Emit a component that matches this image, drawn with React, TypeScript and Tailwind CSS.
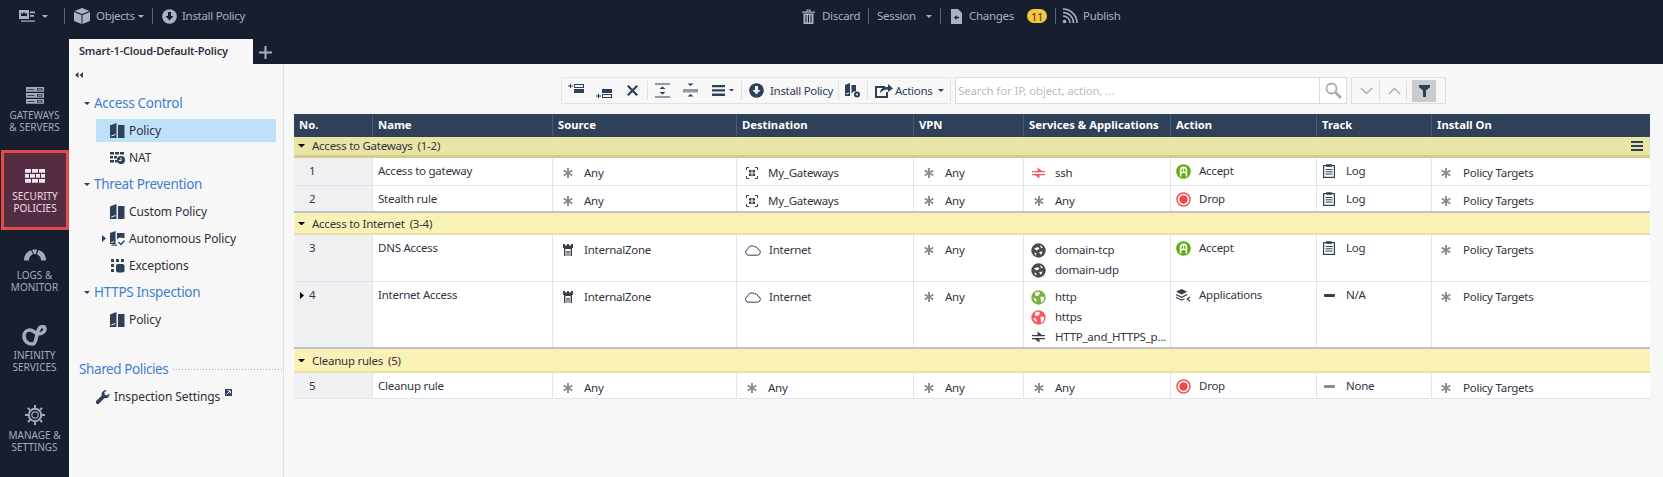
import React from "react";

const NAVY = "#2e3f58";

function Ast({ c = "#8c8c8c" }: { c?: string }) {
  return (
    <svg width="12" height="12" viewBox="0 0 12 12" stroke={c} strokeWidth="1.900">
      <path d="M6 1v10M1.700 3.500l8.600 5M10.300 3.500l-8.600 5" />
    </svg>
  );
}
function Gw() {
  return (
    <svg width="12" height="12" viewBox="0 0 12 12" fill="none" stroke="#3a3f4a" strokeWidth="1">
      <path d="M.5 3V.5H3M9 .5h2.500V3M11.500 9v2.500H9M3 11.500H.5V9" />
      <rect x="3" y="3" width="2.500" height="2.500" fill="#3a3f4a" stroke="none" />
      <rect x="6.500" y="3" width="2.500" height="2.500" fill="#3a3f4a" stroke="none" />
      <rect x="3" y="6.500" width="2.500" height="2.500" fill="#3a3f4a" stroke="none" />
      <rect x="6.500" y="6.500" width="2.500" height="2.500" fill="#3a3f4a" stroke="none" />
    </svg>
  );
}
function Cloud() {
  return (
    <svg width="17" height="12" viewBox="0 0 17 12" fill="none" stroke={NAVY} strokeWidth="1">
      <path d="M4 11.200h9.500a3 3 0 0 0 .6-5.900A3.800 3.800 0 0 0 10.300 2.600 4.300 4.300 0 0 0 3.600 5.400 3 3 0 0 0 4 11.200z" />
    </svg>
  );
}
function Tower() {
  return (
    <svg width="10" height="12" viewBox="0 0 10 12" fill="#3a3f4a">
      <path d="M0 0h2v1.500h2V0h2v1.500h2V0h2v4H0zM1 4h8v1H1zM1 5h1.400v7H1zM7.600 5H9v7H7.600zM3.500 7h3v1h-3zM3.500 8h1v4h-1zM5.500 8h1v4h-1z" />
    </svg>
  );
}
function Swap({ c }: { c: string }) {
  return (
    <svg width="13" height="12" viewBox="0 0 13 12" fill={c}>
      <path d="M0 4h5.500V.5L10 4h3v1.200H0zM0 7h13v1.200H7.500V11.500L3 8.200H0z" />
    </svg>
  );
}
function Domain() {
  return (
    <svg width="15" height="15" viewBox="0 0 15 15">
      <circle cx="7.500" cy="7.500" r="7.200" fill="#4a4a4f" />
      <path d="M3 5.500l4-1.500 1.500 2-3 1.500zM9 2l3 2.500-2 .8zM8 9l3.500-.5L10 12zM3 9.500l2.500 1L5 13z" fill="#fff" />
    </svg>
  );
}
function Globe({ c }: { c: string }) {
  return (
    <svg width="15" height="15" viewBox="0 0 15 15">
      <circle cx="7.500" cy="7.500" r="7.200" fill={c} />
      <path d="M4 2.500l4-1 1 2-2 2.500-3-.5zM9.500 6.500l4 .5-1 4-2.500 2zM2 8l3 .5 1 3.500-2-1z" fill="#fff" opacity="0.950" />
    </svg>
  );
}
function Accept() {
  return (
    <svg width="15" height="15" viewBox="0 0 15 15">
      <circle cx="7.500" cy="7.500" r="7.300" fill="#5cae0f" />
      <path d="M3.800 12.500V6.200a3.700 3.700 0 0 1 7.400 0v6.300h-1.600V9.300h-4.200v3.200zM5.400 7.800h1.500V4.300A2 2 0 0 0 5.400 6.200zM8.100 7.800h1.500V6.200a2 2 0 0 0-1.500-1.900z" fill="#fff" fillRule="evenodd" />
    </svg>
  );
}
function Drop() {
  return (
    <svg width="15" height="15" viewBox="0 0 15 15">
      <circle cx="7.500" cy="7.500" r="6.500" fill="#fff" stroke="#f0555a" strokeWidth="1.500" />
      <circle cx="7.500" cy="7.500" r="4.200" fill="#f0474c" />
    </svg>
  );
}
function Log() {
  return (
    <svg width="12" height="14" viewBox="0 0 12 14" fill="none" stroke={NAVY}>
      <rect x=".6" y="1.600" width="10.800" height="11.800" strokeWidth="1.200" />
      <path d="M3.500 .5h5v2h-5z" fill={NAVY} strokeWidth="0.600" />
      <path d="M2.500 5.500h7M2.500 7.800h7M2.500 10.100h7" strokeWidth="1" />
    </svg>
  );
}
function Apps() {
  return (
    <svg width="16" height="15" viewBox="0 0 16 15" fill="none">
      <path d="M0 3.500L6 .5l6 3-6 3z" fill="#3a3f4a" />
      <path d="M0 6.500l6 3 6-3M0 9.500l6 3 3-1.500" stroke="#3a3f4a" strokeWidth="1.200" />
      <path d="M15 9l-3 2.300 3 2.300" stroke="#3a3f4a" strokeWidth="1.300" />
    </svg>
  );
}
function Dash({ c }: { c: string }) {
  return <span className="block w-[11px] h-[3px] rounded-[1px]" style={{ background: c }} />;
}
function CaretDown({ c = "#000", w = 8 }: { c?: string; w?: number }) {
  return (
    <svg width={w} height={w / 2} viewBox="0 0 8 4" fill={c}>
      <path d="M0 0h8L4 4z" />
    </svg>
  );
}
function Book() {
  return (
    <svg width="15" height="15" viewBox="0 0 15 15" fill={NAVY}>
      <path d="M0 2.500L6.500 0v15H0z" />
      <path d="M1.300 13.500L5.500 12V11L1.300 12.500z" fill="#f7f7f7" />
      <path d="M8 2h6.500v13H8z" />
    </svg>
  );
}

function Sep() {
  return <span className="block w-px h-[16px] bg-[#5a6472]" />;
}

function TopBar() {
  return (
    <div className="h-[39px] pb-[7px] flex items-center text-[11.500px] tracking-[-0.3px] text-[#a8b2bf] shrink-0 whitespace-nowrap">
      <svg className="ml-[19px]" width="16" height="14" viewBox="0 0 16 14" fill="#aab3bd">
        <path d="M0 1h10v9H0zM2 3.500L3.500 5 5 3l1.500 2L8 3.500V7H2z" fillRule="evenodd" />
        <path d="M11 2.500h5v1.800h-5zM11 6h4v1.800h-4zM2 11.500h14v1.200H2z" />
      </svg>
      <span className="ml-[7px]"><CaretDown c="#aab3bd" w={6} /></span>
      <span className="ml-[16px]"><Sep /></span>
      <svg className="ml-[9px]" width="16" height="16" viewBox="0 0 16 16" fill="#aab3bd">
        <path d="M8 0l7.500 3L8 6 .5 3zM0 4l7.500 3v9L0 13zM16 4L8.500 7v9l7.500-3z" />
      </svg>
      <span className="ml-[6px] w-[41px]">Objects</span>
      <span className="ml-[1px]"><CaretDown c="#aab3bd" w={6} /></span>
      <span className="ml-[8px]"><Sep /></span>
      <svg className="ml-[9px]" width="15" height="15" viewBox="0 0 15 15">
        <circle cx="7.500" cy="7.500" r="7.300" fill="#aab3bd" />
        <path d="M6 3h3v4h2.500l-4 4.500-4-4.500H6z" fill="#171f2e" />
      </svg>
      <span className="ml-[5px] w-[66px]">Install Policy</span>

      <svg className="ml-[554px]" width="13" height="15" viewBox="0 0 13 15" fill="#aab3bd">
        <path d="M0 2.500h13v1.200H0zM4.500 2.500V.5h4v2h-1V1.500h-2v1zM1.500 4.500h10V15h-10zM3.500 6v7.500h1V6zM6 6v7.500h1V6zM8.500 6v7.500h1V6z" fillRule="evenodd" />
      </svg>
      <span className="ml-[7px] w-[40px]">Discard</span>
      <span className="ml-[6px]"><Sep /></span>
      <span className="ml-[8px] w-[42px]">Session</span>
      <span className="ml-[7px]"><CaretDown c="#aab3bd" w={6} /></span>
      <span className="ml-[8px]"><Sep /></span>
      <svg className="ml-[10px]" width="11" height="15" viewBox="0 0 11 15" fill="#aab3bd">
        <path d="M0 0h7l4 4v11H0zM3 8.500L5.500 6v1.800H8v1.400H5.500V11zM8 10.500z" fillRule="evenodd" />
      </svg>
      <span className="ml-[7px] w-[47px]">Changes</span>
      <span className="ml-[11px] w-[20px] h-[14px] rounded-full bg-[#f5c63c] text-[#3a3420] text-[11px] flex items-center justify-center leading-none">11</span>
      <span className="ml-[8px]"><Sep /></span>
      <svg className="ml-[6px]" width="16" height="16" viewBox="0 0 16 16" fill="none" stroke="#aab3bd" strokeWidth="1.500">
        <circle cx="2.500" cy="13.500" r="1.800" fill="#aab3bd" stroke="none" />
        <path d="M1 8a7 7 0 0 1 7 7M1 4.500A10.500 10.500 0 0 1 11.500 15M1 1a14 14 0 0 1 14 14" />
      </svg>
      <span className="ml-[5px]">Publish</span>
    </div>
  );
}

function NavItem({ icon, l1, l2, active }: { icon: React.ReactNode; l1: string; l2: string; active?: boolean }) {
  return (
    <div
      className={
        active
          ? "h-[80px] ml-[1px] w-[68px] flex flex-col items-center pt-[13px] bg-[#552d42] border-[3px] border-[#e34a4a] text-[#ecdfe6] text-[10px] leading-[12px]"
          : "h-[80px] w-[69px] flex flex-col items-center pt-[15px] text-[#a2acba] text-[10px] leading-[12px]"
      }
    >
      <div className="h-[20px] flex items-center justify-center">{icon}</div>
      <div className="mt-[4px] text-center whitespace-nowrap">{l1}</div>
      <div className="text-center whitespace-nowrap">{l2}</div>
    </div>
  );
}

function Sidebar() {
  return (
    <div className="w-[69px] pt-[31px] shrink-0">
      <NavItem
        l1="GATEWAYS"
        l2="& SERVERS"
        icon={
          <svg width="18" height="17" viewBox="0 0 18 17" fill="#a2acba">
            <path d="M0 0h18v4.800H0zM0 6h18v4.800H0zM0 12h18v4.800H0z" />
            <path d="M11 1.200h5.500v2.200H11zM11 7.200h5.500v2.200H11zM11 13.200h5.500v2.200H11z" fill="#171f2e" />
            <path d="M12 1.800h3.500v1H12zM12 7.800h3.500v1H12zM12 13.800h3.500v1H12z" fill="#a2acba" />
            <path d="M1.500 2h7v.8h-7zM1.500 8h7v.8h-7zM1.500 14h7v.8h-7z" fill="#171f2e" />
          </svg>
        }
      />
      <NavItem
        active
        l1="SECURITY"
        l2="POLICIES"
        icon={
          <svg width="20" height="14" viewBox="0 0 20 14" fill="#efe6ec">
            <path d="M0 0h6v3.800H0zM7 0h6v3.800H7zM14 0h6v3.800h-6zM0 5h4v3.800H0zM5 5h5v3.800H5zM11 5h4v3.800h-4zM16 5h4v3.800h-4zM0 10h6v3.800H0zM7 10h6v3.800H7zM14 10h6v3.800h-6z" />
          </svg>
        }
      />
      <NavItem
        l1="LOGS &"
        l2="MONITOR"
        icon={
          <svg width="22" height="12" viewBox="0 0 22 12" fill="#a2acba">
            <path d="M0 11.500A11 11 0 0 1 7 1.200l2 4A6.500 6.500 0 0 0 5 11.500z" />
            <path d="M8 .8a11 11 0 0 1 5 -.2l-1 4.500a6.500 6.500 0 0 0-2 .1z" />
            <path d="M14.500 1l-1.500 4.500A6.500 6.500 0 0 1 17 11.500h5A11 11 0 0 0 14.500 1z" />
          </svg>
        }
      />
      <NavItem
        l1="INFINITY"
        l2="SERVICES"
        icon={
          <svg width="25" height="21" viewBox="0 0 25 21" fill="none" stroke="#a2acba" strokeWidth="3.600">
            <path d="M11 19C6 19.500 2 16 2 11 2 7 5 5 8 5c4 0 5.500 4 8 4 3.500 0 7-2 7-5 0-1.800-1.200-2.500-2.500-2.500C16 1.500 15.500 8 14.500 12c-.8 3.500-1.500 6.800-3.500 7z" />
          </svg>
        }
      />
      <NavItem
        l1="MANAGE &"
        l2="SETTINGS"
        icon={
          <svg width="20" height="20" viewBox="0 0 20 20" fill="none" stroke="#a2acba">
            <circle cx="10" cy="10" r="6.200" strokeWidth="2" />
            <circle cx="10" cy="10" r="3.200" strokeWidth="1.200" />
            <path d="M10 0v3M10 17v3M0 10h3M17 10h3M2.900 2.900L5 5M15 15l2.100 2.100M17.100 2.900L15 5M5 15l-2.100 2.100" strokeWidth="2" />
          </svg>
        }
      />
    </div>
  );
}

function TreeHead({ t }: { t: string }) {
  return (
    <div className="h-[27px] flex items-center pl-[15px]">
      <CaretDown c={NAVY} w={6} />
      <span className="ml-[4px] text-[13.500px] tracking-[-0.3px] text-[#3f7fd0]">{t}</span>
    </div>
  );
}
function TreeItem({ icon, t, active, arrow }: { icon: React.ReactNode; t: string; active?: boolean; arrow?: boolean }) {
  return (
    <div className="h-[27px] flex items-center pl-[27px] pr-[7px]">
      <div className={active ? "w-full h-[23px] flex items-center bg-[#bde0fb] pl-[14px] relative" : "w-full h-[23px] flex items-center pl-[14px] relative"}>
        {arrow && (
          <svg className="absolute left-[6px] top-[8px]" width="4" height="7" viewBox="0 0 4 7" fill={NAVY}>
            <path d="M0 0l4 3.500L0 7z" />
          </svg>
        )}
        <span className="w-[15px] flex justify-center">{icon}</span>
        <span className="ml-[4px] text-[12px] tracking-[-0.1px] text-[#2f2f3d]">{t}</span>
      </div>
    </div>
  );
}

function Tree() {
  return (
    <div className="w-[215px] shrink-0 border-r border-[#dfe1e4]">
      <div className="h-[26px] pl-[6px] pt-[8px]">
        <svg width="8" height="6" viewBox="0 0 8 6" fill={NAVY}>
          <path d="M3.500 0v6L0 3zM8 0v6L4.500 3z" />
        </svg>
      </div>
      <TreeHead t="Access Control" />
      <TreeItem active t="Policy" icon={<Book />} />
      <TreeItem
        t="NAT"
        icon={
          <svg width="15" height="12" viewBox="0 0 15 12" fill={NAVY}>
            <path d="M0 0h4v2.500H0zM5 0h4v2.500H5zM10 0h4v2.500h-4zM0 4h3v2.500H0zM4 4h3v2.500H4zM0 8h4v2.500H0zM5 8h2v2.500H5z" />
            <circle cx="11" cy="8" r="4" />
            <path d="M10.500 5.500h1v3h-1zM9 8h2.500v1H9z" fill="#f7f7f7" />
          </svg>
        }
      />
      <TreeHead t="Threat Prevention" />
      <TreeItem t="Custom Policy" icon={<Book />} />
      <TreeItem
        arrow
        t="Autonomous Policy"
        icon={
          <svg width="15" height="15" viewBox="0 0 15 15" fill={NAVY}>
            <path d="M0 2L5.500 0v13H0z" />
            <path d="M1.200 12l3-1v-1l-3 1z" fill="#f7f7f7" />
            <path d="M7 2h7.500v5H12a3.500 3.500 0 0 0-5 2z" />
            <path d="M1.500 13.500h5.500v1.200H1.500z" />
            <path d="M8.500 11l2.500 2.500 3.500-4" fill="none" stroke={NAVY} strokeWidth="1.300" />
          </svg>
        }
      />
      <TreeItem
        t="Exceptions"
        icon={
          <svg width="14" height="14" viewBox="0 0 14 14" fill={NAVY}>
            <rect x="0" y="0" width="3" height="3" rx=".5" />
            <rect x="5" y="0" width="3" height="3" rx=".5" />
            <rect x="10" y="0" width="3" height="3" rx=".5" />
            <rect x="0" y="5" width="3" height="3" rx=".5" />
            <rect x="0" y="10" width="3" height="3" rx=".5" />
            <rect x="5" y="5" width="8.500" height="8.500" rx="2" />
          </svg>
        }
      />
      <TreeHead t="HTTPS Inspection" />
      <TreeItem t="Policy" icon={<Book />} />
      <div className="h-[23px]" />
      <div className="h-[27px] flex items-center pl-[10px]">
        <span className="text-[13.500px] tracking-[-0.4px] text-[#3f7fd0] whitespace-nowrap">Shared Policies</span>
        <span className="flex-1 ml-[5px] h-px bg-[repeating-linear-gradient(90deg,#a5abb3_0_1px,transparent_1px_3px)]" />
      </div>
      <div className="h-[27px] flex items-center pl-[27px]">
        <svg width="14" height="14" viewBox="0 0 14 14" fill={NAVY}>
          <path d="M13.500 3.500L11 5.500 8.800 4.800 8.300 2.500 10.800.4a4 4 0 0 0-5 5L.4 10.800a1.900 1.900 0 0 0 2.700 2.700l5.400-5.400a4 4 0 0 0 5-4.600z" />
        </svg>
        <span className="ml-[4px] text-[12px] tracking-[-0.1px] text-[#2f2f3d]">Inspection Settings</span>
        <svg className="ml-[5px] -mt-[9px]" width="7" height="7" viewBox="0 0 7 7">
          <rect width="7" height="7" fill={NAVY} />
          <path d="M1.500 5.500l3.500-3.500M2.500 1.700H5.300v2.800" stroke="#fff" strokeWidth="0.900" fill="none" />
        </svg>
      </div>
    </div>
  );
}

function TbSep() {
  return <span className="block w-px h-[19px] bg-[#dcdfe3]" />;
}

function RowAdd({ top }: { top?: boolean }) {
  const filledY = top ? 5 : 0;
  const hollowY = top ? 0 : 5;
  return (
    <svg width="16" height="9" viewBox="0 0 16 9" fill={NAVY}>
      <path d={`M0 ${hollowY + 2}h5M2.500 ${hollowY}v4`} stroke={NAVY} strokeWidth="1" fill="none" />
      <rect x="6.500" y={hollowY + 0.5} width="9" height="3" fill="none" stroke={NAVY} />
      <rect x="6" y={filledY} width="10" height="4" />
    </svg>
  );
}

function Toolbar() {
  return (
    <div className="flex items-start mt-[13px] h-[27px]">
      <div className="w-[390px] h-[27px] border border-[#e2e4e8] flex items-center text-[11.500px] tracking-[-0.3px] text-[#2f3e56] whitespace-nowrap">
        <span className="ml-[6px] -mt-[5px] leading-none"><RowAdd top /></span>
        <span className="ml-[12px] mt-[5px] leading-none"><RowAdd /></span>
        <svg className="ml-[15px]" width="11" height="11" viewBox="0 0 11 11" stroke={NAVY} strokeWidth="2.200">
          <path d="M.8.8l9.400 9.400M10.200.8L.8 10.200" />
        </svg>
        <span className="ml-[9px]"><TbSep /></span>
        <svg className="ml-[7px]" width="15" height="15" viewBox="0 0 15 15" fill={NAVY}>
          <path d="M0 .5h15v1H0zM0 13.500h15v1H0zM7.500 3.500l3 2.500h-6zM7.500 11.500l-3-2.500h6z" />
        </svg>
        <svg className="ml-[13px]" width="15" height="15" viewBox="0 0 15 15" fill={NAVY}>
          <path d="M0 6.500h15v1H0zM0 8.500h15v.8H0zM4.500 .5h6l-3 2.500zM7.500 11l3 2.500h-6z" />
        </svg>
        <svg className="ml-[14px]" width="13" height="11" viewBox="0 0 13 11" fill={NAVY}>
          <path d="M0 0h13v2.300H0zM0 4.300h13v2.300H0zM0 8.600h13v2.300H0z" />
        </svg>
        <span className="ml-[4px]"><CaretDown c={NAVY} w={5} /></span>
        <span className="ml-[7px]"><TbSep /></span>
        <svg className="ml-[7px]" width="15" height="15" viewBox="0 0 15 15">
          <circle cx="7.500" cy="7.500" r="7.300" fill={NAVY} />
          <path d="M6 3h3v4h2.500l-4 4.500-4-4.500H6z" fill="#f7f7f7" />
        </svg>
        <span className="ml-[6px] w-[63px]">Install Policy</span>
        <span className="ml-[5px]"><TbSep /></span>
        <svg className="ml-[6px]" width="16" height="15" viewBox="0 0 16 15" fill={NAVY}>
          <path d="M0 2L5 0v13H0z" />
          <path d="M1 11.500l3-1v-1l-3 1z" fill="#f7f7f7" />
          <path d="M6.500 2H11v6.500a3.500 3.500 0 0 0-4.500 3z" />
          <circle cx="12" cy="11.500" r="3" />
          <circle cx="12" cy="11.500" r="1" fill="#f7f7f7" />
        </svg>
        <span className="ml-[6px]"><TbSep /></span>
        <svg className="ml-[7px]" width="18" height="15" viewBox="0 0 18 15" fill="none" stroke={NAVY}>
          <path d="M10 4H1v10h11V9" strokeWidth="2" />
          <path d="M5 10c0-4 3-6 8-6V1l5 4.500L13 9V6.500C9 6.500 7 8 5 10z" fill={NAVY} stroke="none" />
        </svg>
        <span className="ml-[2px] w-[40px]">Actions</span>
        <span className="ml-[3px]"><CaretDown c={NAVY} w={6} /></span>
      </div>
      <div className="ml-[4px] w-[392px] h-[27px] border border-[#d9dbde] bg-white flex items-center">
        <span className="flex-1 pl-[2px] text-[11.500px] tracking-[-0.15px] text-[#b9bdc2]">Search for IP, object, action, ...</span>
        <span className="w-[27px] h-full border-l border-[#d9dbde] flex items-center justify-center">
          <svg width="17" height="17" viewBox="0 0 17 17" fill="none" stroke="#a9adb2">
            <circle cx="6.500" cy="6.500" r="5" strokeWidth="1.800" />
            <path d="M10.500 10.500L16 16" strokeWidth="3" />
          </svg>
        </span>
      </div>
      <div className="ml-[4px] w-[95px] h-[27px] border border-[#dcdee1] flex items-center">
        <svg className="ml-[8px]" width="13" height="8" viewBox="0 0 13 8" fill="none" stroke="#aab0b6" strokeWidth="1.600">
          <path d="M.8 1l5.700 5.500L12.200 1" />
        </svg>
        <span className="ml-[6px] block w-px h-[20px] bg-[#dcdee1]" />
        <svg className="ml-[8px]" width="13" height="8" viewBox="0 0 13 8" fill="none" stroke="#aab0b6" strokeWidth="1.600">
          <path d="M.8 7l5.700-5.500L12.200 7" />
        </svg>
        <span className="ml-[5px] block w-px h-[20px] bg-[#dcdee1]" />
        <span className="ml-[5px] w-[24px] h-[22px] bg-[#c9cbcd] flex items-center justify-center">
          <svg width="11" height="12" viewBox="0 0 11 12" fill={NAVY}>
            <path d="M0 0h11v2.200L7 5.500V12H4V5.500L0 2.200z" />
          </svg>
        </span>
      </div>
    </div>
  );
}

const COLS = "grid grid-cols-[79px_180px_184px_177px_110px_147px_146px_115px_218px]";

function Section({ t, range, box, menu }: { t: string; range: string; box: string; menu?: boolean }) {
  return (
    <div className={`${box} flex items-center text-[11.500px] tracking-[-0.25px] text-[#33333f] pl-[4px]`}>
      <CaretDown c="#000" w={7} />
      <span className="ml-[7px]">{t}</span>
      <span className="ml-[5px]">{range}</span>
      {menu && (
        <svg className="ml-auto mr-[7px]" width="12" height="10" viewBox="0 0 12 10" fill={NAVY}>
          <path d="M0 0h12v2H0zM0 4h12v2H0zM0 8h12v2H0z" />
        </svg>
      )}
    </div>
  );
}

function Item({ icon, t, w = 15, gap = 9 }: { icon: React.ReactNode; t: string; w?: number; gap?: number }) {
  return (
    <div className="h-[20px] flex items-center whitespace-nowrap">
      <span className="flex justify-center shrink-0" style={{ width: w }}>{icon}</span>
      <span style={{ marginLeft: gap }}>{t}</span>
    </div>
  );
}

function Cell({ children, pl = 7, pt = 5 }: { children: React.ReactNode; pl?: number; pt?: number }) {
  return (
    <div className="border-r border-[#e1e4ea] overflow-hidden" style={{ paddingLeft: pl, paddingTop: pt }}>
      {children}
    </div>
  );
}

type RowP = {
  no: string;
  arrow?: boolean;
  name: string;
  src: React.ReactNode;
  dst: React.ReactNode;
  svc: React.ReactNode;
  act: React.ReactNode;
  trk: React.ReactNode;
  h: string;
  last?: boolean;
};
function Row({ no, arrow, name, src, dst, svc, act, trk, h, last }: RowP) {
  return (
    <div className={`${COLS} ${h} ${last ? "border-b-2 border-[#bfc1c6]" : "border-b border-[#e1e4ea]"} bg-white text-[11.500px] tracking-[-0.25px] text-[#33333f]`}>
      <div className="bg-[#eff0f2] border-r border-[#e1e4ea] pt-[3px] flex items-start">
        <span className="w-[4px] ml-[6px] h-[20px] flex items-center">
          {arrow && (
            <svg width="4" height="7" viewBox="0 0 4 7" fill="#000">
              <path d="M0 0l4 3.500L0 7z" />
            </svg>
          )}
        </span>
        <span className="ml-[5px] leading-[20px]">{no}</span>
      </div>
      <Cell pl={5} pt={3}><div className="leading-[20px]">{name}</div></Cell>
      <Cell>{src}</Cell>
      <Cell>{dst}</Cell>
      <Cell><Item icon={<Ast />} t="Any" /></Cell>
      <Cell>{svc}</Cell>
      <Cell pl={5} pt={3}>{act}</Cell>
      <Cell pl={6} pt={3}>{trk}</Cell>
      <div style={{ paddingLeft: 8, paddingTop: 5 }}>
        <Item icon={<Ast />} t="Policy Targets" w={12} gap={11} />
      </div>
    </div>
  );
}

const Any = <Item icon={<Ast />} t="Any" />;
const Zone = <Item icon={<Tower />} t="InternalZone" />;
const MyGw = <Item icon={<Gw />} t="My_Gateways" gap={9} />;
const Inet = <Item icon={<Cloud />} t="Internet" w={17} gap={8} />;
const AccA = <Item icon={<Accept />} t="Accept" gap={8} />;
const DropA = <Item icon={<Drop />} t="Drop" gap={8} />;
const LogT = <Item icon={<Log />} t="Log" w={12} gap={11} />;

function Table() {
  const heads = ["No.", "Name", "Source", "Destination", "VPN", "Services & Applications", "Action", "Track", "Install On"];
  return (
    <div className="mt-[10px] w-[1356px]">
      <div className={`${COLS} h-[23px] bg-[#2f4159] text-white text-[11.250px] font-bold`}>
        {heads.map((h, i) => (
          <div key={h} className={i < 8 ? "border-r border-[#4a5c75] pl-[5px] flex items-center whitespace-nowrap" : "pl-[5px] flex items-center"}>
            {h}
          </div>
        ))}
      </div>
      <Section box="h-[21px] bg-[#eae5a6] border-b-[3px] border-[#d3cc8b]" menu t="Access to Gateways" range="(1-2)" />
      <Row h="h-[28px]" no="1" name="Access to gateway" src={Any} dst={MyGw} svc={<Item icon={<Swap c="#f0595e" />} t="ssh" />} act={AccA} trk={LogT} />
      <Row h="h-[27px]" last no="2" name="Stealth rule" src={Any} dst={MyGw} svc={Any} act={DropA} trk={LogT} />
      <Section box="h-[22px] pt-[1px] bg-[#faf1b6] border-b-[2px] border-[#e8e0a6]" t="Access to Internet" range="(3-4)" />
      <Row
        h="h-[47px]"
        no="3"
        name="DNS Access"
        src={Zone}
        dst={Inet}
        svc={
          <>
            <Item icon={<Domain />} t="domain-tcp" />
            <Item icon={<Domain />} t="domain-udp" />
          </>
        }
        act={AccA}
        trk={LogT}
      />
      <Row
        h="h-[67px]"
        last
        arrow
        no="4"
        name="Internet Access"
        src={Zone}
        dst={Inet}
        svc={
          <>
            <Item icon={<Globe c="#7cae3f" />} t="http" />
            <Item icon={<Globe c="#f4595f" />} t="https" />
            <Item icon={<Swap c="#3a3f4a" />} t="HTTP_and_HTTPS_p..." />
          </>
        }
        act={<Item icon={<Apps />} t="Applications" gap={8} />}
        trk={<Item icon={<Dash c="#2e3f58" />} t="N/A" w={12} gap={11} />}
      />
      <Section box="h-[24px] pt-[1px] bg-[#faf1b6] border-b-[2px] border-[#e8e0a6]" t="Cleanup rules" range="(5)" />
      <Row
        h="h-[26px]"
        no="5"
        name="Cleanup rule"
        src={Any}
        dst={Any}
        svc={Any}
        act={DropA}
        trk={<Item icon={<Dash c="#8a8a8a" />} t="None" w={12} gap={11} />}
      />
    </div>
  );
}

export default function App() {
  return (
    <div className="w-[1663px] h-[477px] overflow-hidden bg-[#171f2e] flex flex-col font-['Noto_Sans',sans-serif]">
      <TopBar />
      <div className="flex flex-1 min-h-0">
        <Sidebar />
        <div className="flex-1 flex flex-col min-w-0">
          <div className="h-[25px] flex items-stretch shrink-0">
            <div className="w-[184px] bg-[#f7f7f7] flex items-center pl-[10px] text-[11px] font-semibold tracking-[-0.2px] text-[#33333f] whitespace-nowrap">
              Smart-1-Cloud-Default-Policy
            </div>
            <svg className="ml-[6px] mt-[7px]" width="13" height="13" viewBox="0 0 13 13" stroke="#a8b2bf" strokeWidth="2">
              <path d="M6.500 0v13M0 6.500h13" />
            </svg>
          </div>
          <div className="flex-1 bg-[#f7f7f7] flex min-h-0">
            <Tree />
            <div className="pl-[10px] flex flex-col">
              <div className="pl-[267px]"><Toolbar /></div>
              <Table />
            </div>
          </div>
        </div>
      </div>
    </div>
  );
}
